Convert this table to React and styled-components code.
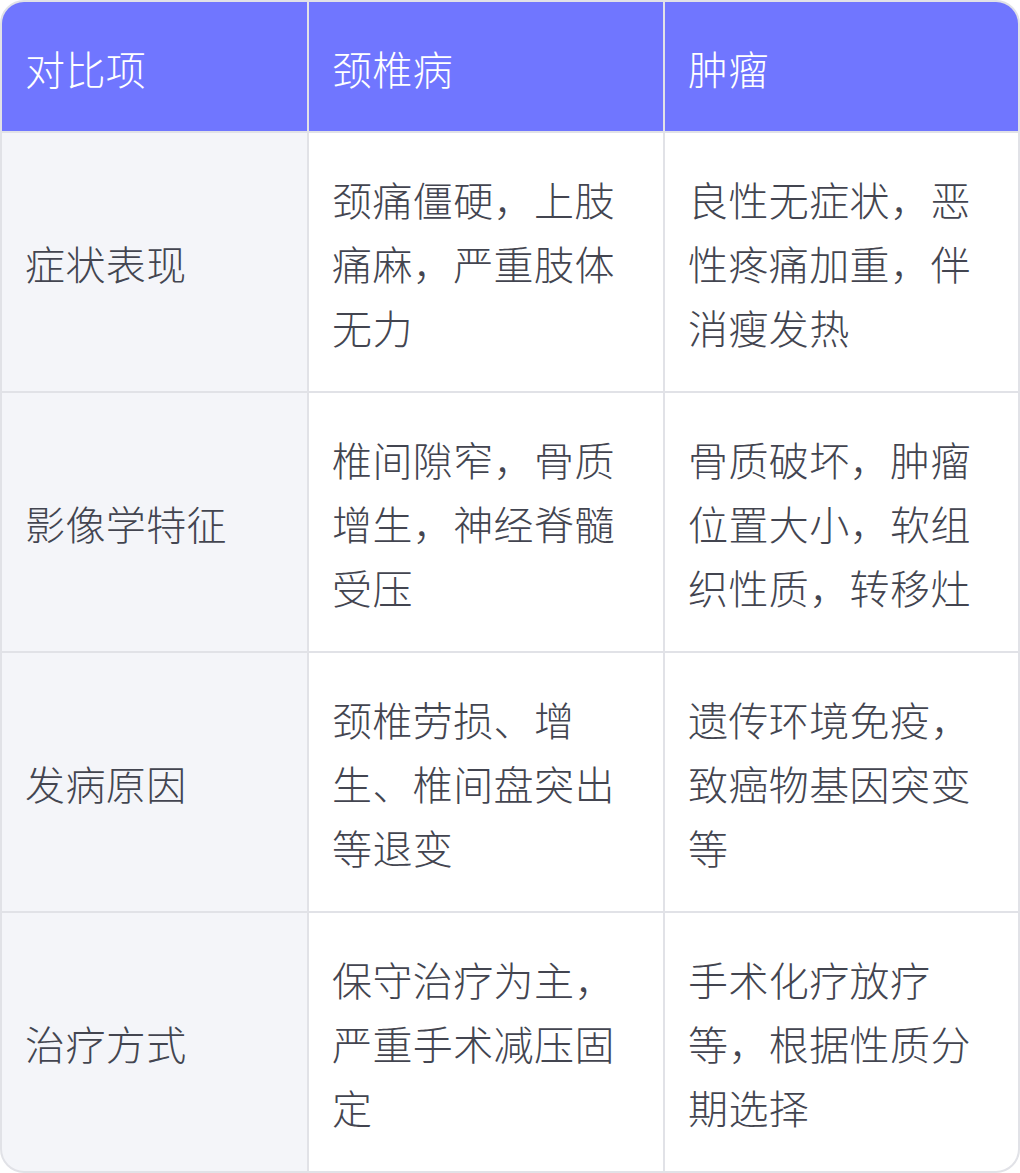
import React from "react";
import styled, { createGlobalStyle } from "styled-components";

const Global = createGlobalStyle`
  html, body { margin: 0; padding: 0; background: #ffffff; }
  body { font-family: "Noto Sans CJK SC", "Noto Sans", sans-serif; }
`;

const Table = styled.div`
  width: 1020px;
  height: 1173px;
  box-sizing: border-box;
  border: 2px solid #e1e2e7;
  border-radius: 24px;
  overflow: hidden;
  background: #e1e2e7;
  display: grid;
  grid-template-columns: 305px 354px 1fr;
  grid-template-rows: 129px repeat(4, 1fr);
  gap: 2px;
`;

const Cell = styled.div`
  display: flex;
  align-items: center;
  padding: 2px 24px 0 23px;
  font-size: 40px;
  font-weight: 300;
  line-height: 64px;
  letter-spacing: 0.4px;
  color: ${(p) => (p.$head ? "#ffffff" : "#434550")};
  background: ${(p) => (p.$head ? "#7076ff" : p.$label ? "#f4f5f9" : "#ffffff")};
`;

const Text = styled.div`
  width: 100%;
  word-break: break-all;
`;

const head = ["对比项", "颈椎病", "肿瘤"];
const rows = [
  ["症状表现", "颈痛僵硬，上肢痛麻，严重肢体无力", "良性无症状，恶性疼痛加重，伴消瘦发热"],
  ["影像学特征", "椎间隙窄，骨质增生，神经脊髓受压", "骨质破坏，肿瘤位置大小，软组织性质，转移灶"],
  ["发病原因", "颈椎劳损、增生、椎间盘突出等退变", "遗传环境免疫，致癌物基因突变等"],
  ["治疗方式", "保守治疗为主，严重手术减压固定", "手术化疗放疗等，根据性质分期选择"],
];

export default function App() {
  return (
    <>
      <Global />
      <Table>
        {head.map((h) => (
          <Cell key={h} $head>
            <Text>{h}</Text>
          </Cell>
        ))}
        {rows.map((r) =>
          r.map((c, i) => (
            <Cell key={r[0] + i} $label={i === 0}>
              <Text>{c}</Text>
            </Cell>
          ))
        )}
      </Table>
    </>
  );
}
